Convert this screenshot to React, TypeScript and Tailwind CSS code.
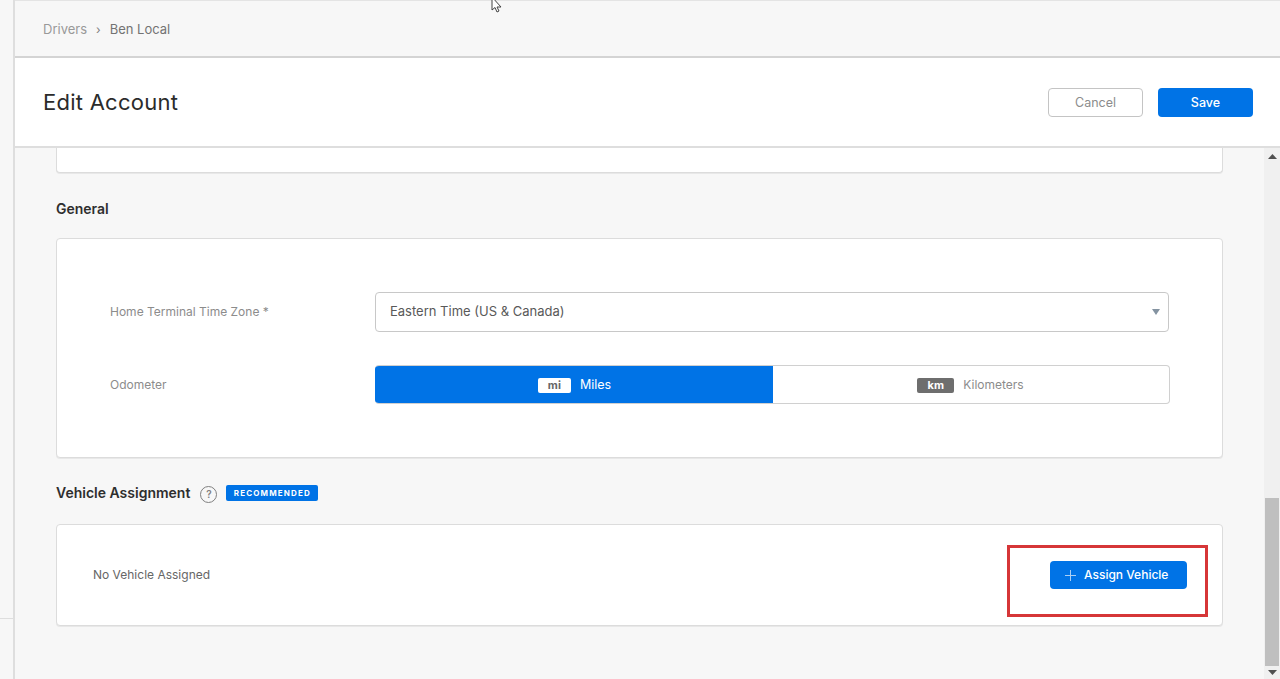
import React from "react";

const font = { fontFamily: "Inter, 'Liberation Sans', sans-serif" };

export default function App() {
  return (
    <div style={font} className="relative flex h-[679px] w-[1280px] overflow-hidden bg-[#f7f7f7] text-[#333]">
      {/* narrow left rail */}
      <aside className="flex h-full w-[15px] shrink-0 flex-col border-r-2 border-[#dedede] bg-[#f7f7f7]">
        <div className="h-[619px] shrink-0 border-b border-[#dedede]" />
      </aside>

      <main className="flex h-full min-w-0 flex-1 flex-col">
        {/* breadcrumb */}
        <div className="flex h-[58px] shrink-0 items-center border-t border-b-2 border-t-[#e4e4e4] border-b-[#d4d4d4] pl-[28px] pt-[2px] text-[13px]">
          <span className="text-[#999999]">Drivers</span>
          <span className="mx-[9px] text-[12px] text-[#808080]">›</span>
          <span className="text-[#737373]">Ben Local</span>
        </div>

        {/* title bar */}
        <div className="flex h-[90px] shrink-0 items-center justify-between border-b-2 border-[#dedede] bg-white pl-[28px] pr-[27px]">
          <h1 className="text-[22px] font-normal tracking-[0.25px] text-[#2b2b2b]">Edit Account</h1>
          <div className="flex gap-[15px]">
            <button className="h-[29px] w-[95px] rounded-[4px] border border-[#c4c4c4] bg-white pt-[2px] text-[12.5px] text-[#8c8c8c]">Cancel</button>
            <button className="h-[29px] w-[95px] rounded-[4px] bg-[#0073e6] pt-[2px] text-[12.5px] font-medium text-white">Save</button>
          </div>
        </div>

        <div className="flex min-h-0 flex-1">
          {/* scrolling body */}
          <div className="min-w-0 flex-1 pl-[41px] pr-[41px]">
            <div className="h-[25px] rounded-b-[4px] border border-t-0 border-[#dcdcdc] bg-white shadow-[0_1px_0_#e8e8e8]" />

            <h2 className="mt-[27px] text-[14px] leading-[18px] font-semibold text-[#2e2e2e]">General</h2>
            <section className="mt-[20px] rounded-[4px] border border-[#dcdcdc] bg-white py-[53px] pl-[53px] pr-[53px] shadow-[0_1px_0_#e8e8e8]">
              <div className="flex h-[40px] items-center">
                <label className="w-[265px] shrink-0 text-[12px] text-[#8c8c8c]">Home Terminal Time Zone *</label>
                <div className="flex h-[40px] flex-1 items-center justify-between rounded-[4px] border border-[#c8c8c8] bg-white pb-px pl-[14px] pr-[8px] text-[13px] text-[#595959]">
                  <span>Eastern Time (US &amp; Canada)</span>
                  <svg width="8" height="6" viewBox="0 0 8 6"><path d="M0 0h8L4 6z" fill="#8493a1" /></svg>
                </div>
              </div>
              <div className="-mr-px mt-[33px] flex h-[39px] items-center">
                <label className="w-[265px] shrink-0 text-[12px] text-[#8c8c8c]">Odometer</label>
                <div className="flex h-[39px] flex-1 overflow-hidden rounded-[4px] border border-l-0 border-[#d0d0d0] bg-white">
                  <div className="flex w-[398px] items-center justify-center gap-[9px] bg-[#0073e6] pt-px text-[12.5px] text-white">
                    <span className="ml-px flex h-[15px] w-[33px] items-center justify-center rounded-[2px] bg-white text-[11px] font-bold text-[#666]">mi</span>
                    <span>Miles</span>
                  </div>
                  <div className="flex flex-1 items-center justify-center gap-[9px] pr-px pt-px text-[12px] text-[#8c8c8c]">
                    <span className="flex h-[15px] w-[37px] items-center justify-center rounded-[2px] bg-[#6e6e6e] text-[11px] font-bold text-white">km</span>
                    <span>Kilometers</span>
                  </div>
                </div>
              </div>
            </section>

            <div className="mt-[26px] flex h-[18px] items-center">
              <h2 className="text-[14px] leading-[18px] font-semibold text-[#2e2e2e]">Vehicle Assignment</h2>
              <span className="ml-[10px] mt-[2px] flex h-[17px] w-[17px] items-center justify-center rounded-full border border-[#808080] text-[10px] font-semibold text-[#808080]">?</span>
              <span className="ml-[9px] flex h-[16px] w-[92px] items-center justify-center rounded-[2px] bg-[#0073e6] text-[8px] font-bold tracking-[1.15px] text-white">RECOMMENDED</span>
            </div>
            <section className="mt-[22px] flex h-[102px] items-center justify-between rounded-[4px] border border-[#dcdcdc] bg-white pl-[36px] pr-[35px] shadow-[0_1px_0_#e8e8e8]">
              <span className="text-[12px] text-[#666]">No Vehicle Assigned</span>
              <button className="flex h-[28px] w-[137px] items-center gap-[8px] rounded-[4px] bg-[#0073e6] pl-[15px] text-[12px] font-medium text-white">
                <svg width="11" height="11" viewBox="0 0 11 11"><path d="M5.5 0v11M0 5.5h11" stroke="#a9cff5" strokeWidth="1" /></svg>
                Assign Vehicle
              </button>
            </section>
          </div>

          {/* scrollbar */}
          <div className="flex w-[16px] shrink-0 flex-col items-center bg-[#f0f0f0]">
            <div className="flex h-[17px] w-full items-center justify-center">
              <svg width="9" height="5" viewBox="0 0 9 5"><path d="M0 5h9L4.5 0z" fill="#505050" /></svg>
            </div>
            <div className="flex-1" />
            <div className="h-[168px] w-[14px] bg-[#bfbfbf]" />
            <div className="flex h-[13px] w-full items-center justify-center">
              <svg width="9" height="5" viewBox="0 0 9 5"><path d="M0 0h9L4.5 5z" fill="#505050" /></svg>
            </div>
          </div>
        </div>
      </main>

      {/* red annotation */}
      <div className="absolute left-[1007px] top-[545px] h-[72px] w-[201px] border-[3px] border-[#d63638]" />

      {/* mouse pointer */}
      <svg className="absolute left-[491px] top-0" width="12" height="14" viewBox="0 0 12 14">
        <path d="M1 -3v13l3-2.500 2 4.500 2-1-2-4h4z" fill="#fff" stroke="#444" strokeWidth="1" />
      </svg>
    </div>
  );
}
